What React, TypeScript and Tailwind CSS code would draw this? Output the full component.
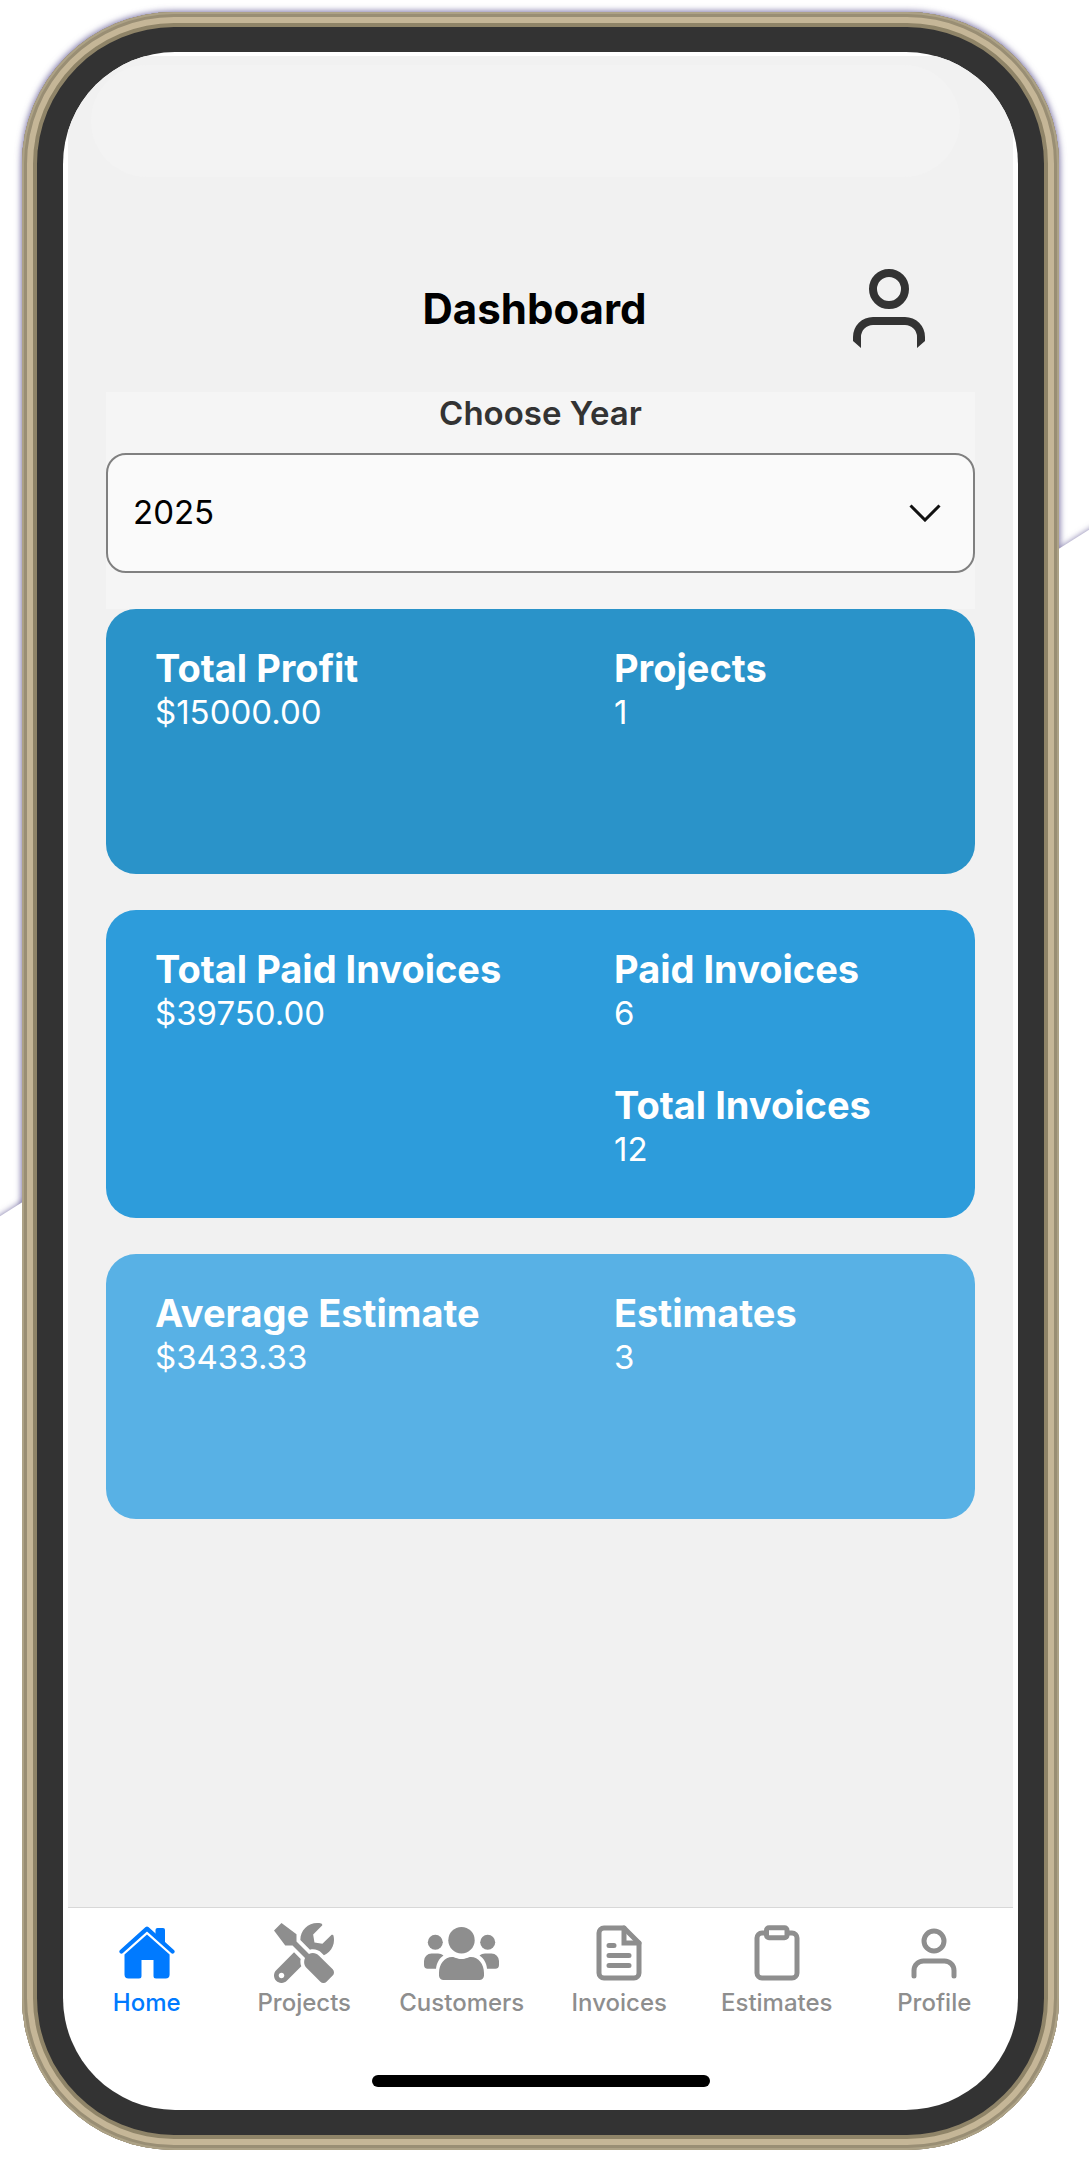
import { FaTools } from "react-icons/fa";
import type { ReactNode } from "react";

function HomeIcon() {
  return (
    <svg viewBox="0 0 56 54" className="h-[54px] w-14" fill="currentColor" aria-hidden="true">
      <path d="M36.5 9V4a2 2 0 0 1 2-2H44a2 2 0 0 1 2 2v16l-9.5-9Z" />
      <path d="M2.5 25.5 28 2.6l25.500 22.900" fill="none" stroke="currentColor" strokeWidth="4.200" strokeLinecap="round" strokeLinejoin="round" />
      <path d="M28 8.500 50.600 28.500V48.500a4 4 0 0 1-4 4H37a2.500 2.500 0 0 1-2.500-2.500V34H22.500v16a2.500 2.500 0 0 1-2.500 2.500H9.500a4 4 0 0 1-4-4V28.500Z" />
    </svg>
  );
}

function PeopleIcon() {
  return (
    <svg viewBox="0 0 75 53" className="h-[53px] w-[75px]" fill="currentColor" aria-hidden="true">
      <circle cx="37.500" cy="13.200" r="13.200" />
      <circle cx="11.300" cy="15.200" r="7.500" />
      <circle cx="63.700" cy="15.200" r="7.500" />
      <path d="M15 48.500V46C15 37 20.500 30 28 30c3 0 4.500 2 9.500 2S44 30 47 30c7.500 0 13 7 13 16v2.500a4.500 4.500 0 0 1-4.500 4.500h-36a4.500 4.500 0 0 1-4.500-4.500Z" />
      <path d="M0 38v-4a7.500 7.500 0 0 1 7.500-7.500H14c2 0 4 .7 5.500 2C15 31.500 12.500 36.500 12 41.700H3.700A3.700 3.700 0 0 1 0 38ZM75 38v-4a7.500 7.500 0 0 0-7.500-7.500H61c-2 0-4 .7-5.500 2C60 31.500 62.500 36.500 63 41.700h8.300A3.700 3.700 0 0 0 75 38Z" />
    </svg>
  );
}

function InvoiceIcon() {
  return (
    <svg viewBox="0 0 46 56" className="h-14 w-[46px]" fill="none" stroke="currentColor" strokeWidth="5" strokeLinejoin="round" strokeLinecap="round" aria-hidden="true">
      <path d="M8 3H28L43 18V48a5 5 0 0 1-5 5H8a5 5 0 0 1-5-5V8a5 5 0 0 1 5-5Z" />
      <path d="M28 3V18H43" strokeLinejoin="miter" />
      <path d="M13 20.500h5M13 30.500H33M13 40.500H33" />
    </svg>
  );
}

function ClipboardIcon() {
  return (
    <svg viewBox="0 0 46 56" className="h-14 w-[46px]" fill="none" stroke="currentColor" strokeWidth="5" aria-hidden="true">
      <path d="M13 8H8a5 5 0 0 0-5 5V48a5 5 0 0 0 5 5H38a5 5 0 0 0 5-5V13a5 5 0 0 0-5-5H33" />
      <rect x="12.500" y="2.800" width="20.500" height="10" rx="2.500" />
    </svg>
  );
}

function PersonIcon() {
  return (
    <svg viewBox="0 0 46 51" className="h-[51px] w-[46px]" fill="none" stroke="currentColor" strokeWidth="5" strokeLinecap="round" aria-hidden="true">
      <circle cx="23" cy="13" r="10" />
      <path d="M3 48V42.500A9.500 9.500 0 0 1 12.500 33h21A9.500 9.500 0 0 1 43 42.500V48" />
    </svg>
  );
}

function AccountIcon() {
  return (
    <svg viewBox="0 0 72 79" className="h-[79px] w-[72px]" fill="none" stroke="currentColor" strokeWidth="8" aria-hidden="true">
      <circle cx="36" cy="20" r="16" />
      <path d="M8 79 0 72V68A20 20 0 0 1 20 48H52A20 20 0 0 1 72 68V72L64 79V68A12 12 0 0 0 52 56H20A12 12 0 0 0 8 68Z" fill="currentColor" stroke="none" />
    </svg>
  );
}

type Stat = { label: string; value: string };

function Card({ color, left, right }: { color: string; left: Stat; right: Stat[] }) {
  return (
    <section className={`grid min-h-[265px] grid-cols-[459fr_312fr] rounded-[30px] px-[49px] pt-9 pb-12 text-white ${color}`}>
      {[[left], right].map((stats, i) => (
        <dl key={i} className="flex flex-col gap-12">
          {stats.map((s) => (
            <div key={s.label}>
              <dt className="text-[38px] leading-[46px] font-bold whitespace-nowrap">{s.label}</dt>
              <dd className="text-[33px] leading-[42px]">{s.value}</dd>
            </div>
          ))}
        </dl>
      ))}
    </section>
  );
}

const tabs: { label: string; icon: ReactNode }[] = [
  { label: "Home", icon: <HomeIcon /> },
  { label: "Projects", icon: <FaTools className="size-[60px]" /> },
  { label: "Customers", icon: <PeopleIcon /> },
  { label: "Invoices", icon: <InvoiceIcon /> },
  { label: "Estimates", icon: <ClipboardIcon /> },
  { label: "Profile", icon: <PersonIcon /> },
];

export default function App() {
  return (
    <div className="relative isolate overflow-hidden bg-white pt-3 pr-[30px] pb-[11px] pl-[22px] font-['Inter',sans-serif]">
      <svg className="absolute inset-0 -z-10 h-full w-full" viewBox="0 0 1089 2161" preserveAspectRatio="none" aria-hidden="true">
        <defs>
          <filter id="glow" x="-10%" y="-10%" width="120%" height="120%">
            <feGaussianBlur stdDeviation="3" />
          </filter>
        </defs>
        <rect x="21" y="11" width="1039" height="2140" rx="152" fill="#7c74a6" filter="url(#glow)" />
        <path d="M-60 1254 1149 492V2300H-60Z" fill="#7c74a6" filter="url(#glow)" />
        <path d="M-60 1254 1149 492V2300H-60Z" fill="#fff" />
      </svg>
      <div className="rounded-[152px] bg-[#333] px-[41px] py-10 shadow-[inset_0_0_0_2px_#ada286,inset_0_0_0_5px_#998e74,inset_0_0_0_11px_#c5b697,inset_0_0_0_15px_#8f8468]">
        <div className="flex flex-col overflow-hidden rounded-[112px] bg-white pt-1">
          <div className="mx-[5px] bg-[#f1f1f1] pt-[9px]">
            <div className="mr-[53px] ml-[23px] h-28 rounded-[56px] bg-[#f3f3f3]" />
            <header className="mt-[92px] grid grid-cols-[1fr_auto_1fr] items-center px-[88px]">
              <h1 className="col-start-2 -ml-3 text-[42px] leading-[52px] font-bold text-black">Dashboard</h1>
              <button type="button" aria-label="Account" className="justify-self-end text-[#333]">
                <AccountIcon />
              </button>
            </header>
            <main className="px-[38px] pt-11 pb-[388px]">
              <div className="bg-[#f5f5f5] pb-9">
                <label htmlFor="year" className="block h-[61px] text-center text-[33px] leading-[42px] font-semibold text-[#333]">
                  Choose Year
                </label>
                <div className="relative">
                  <select id="year" defaultValue="2025" className="block h-[120px] w-full appearance-none rounded-[20px] border-2 border-[#808080] bg-[#fafafa] px-[25px] text-[33px] text-black">
                    <option>2025</option>
                    <option>2024</option>
                  </select>
                  <svg viewBox="0 0 32 18" className="pointer-events-none absolute top-[51px] right-[34px] h-[18px] w-8" fill="none" stroke="#111" strokeWidth="3" aria-hidden="true">
                    <path d="m1.500 1.500 14.500 14.500 14.500-14.500" />
                  </svg>
                </div>
              </div>
              <div className="flex flex-col gap-9">
                <Card color="bg-[#2a93c9]" left={{ label: "Total Profit", value: "$15000.00" }} right={[{ label: "Projects", value: "1" }]} />
                <Card color="bg-[#2d9cdb]" left={{ label: "Total Paid Invoices", value: "$39750.00" }} right={[{ label: "Paid Invoices", value: "6" }, { label: "Total Invoices", value: "12" }]} />
                <Card color="bg-[#58b1e5]" left={{ label: "Average Estimate", value: "$3433.33" }} right={[{ label: "Estimates", value: "3" }]} />
              </div>
            </main>
          </div>
          <nav className="mx-[5px] grid grid-cols-6 border-t border-[#d8d8d8] pt-[14px]">
            {tabs.map((t) => (
              <a key={t.label} href="#" aria-current={t.label === "Home" ? "page" : undefined} className="flex flex-col items-center text-[#8e8e8e] aria-[current=page]:text-[#007aff]">
                <span className="flex h-[62px] items-center justify-center">{t.icon}</span>
                <span className="mt-1 text-[24px] leading-[30px] font-medium">{t.label}</span>
              </a>
            ))}
          </nav>
          <div className="mx-auto mt-[57px] mb-[23px] h-3 w-[338px] rounded-full bg-black" />
        </div>
      </div>
    </div>
  );
}
